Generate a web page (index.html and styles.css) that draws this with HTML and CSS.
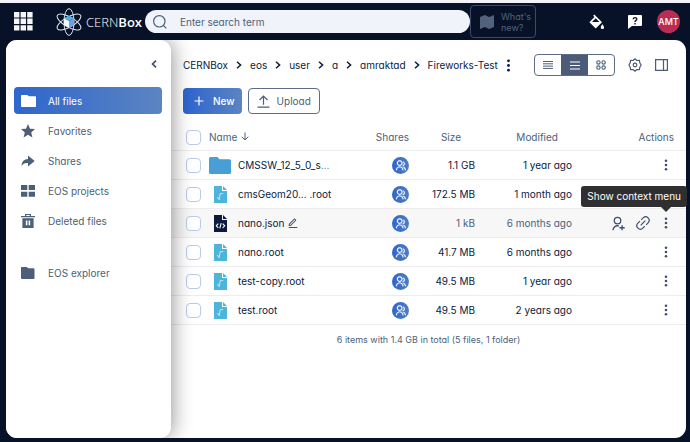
FILE: index.html
```html
<!DOCTYPE html>
<html lang="en">
<head>
<meta charset="utf-8">
<title>Fireworks-Test - CERNBox</title>
<link rel="stylesheet" href="styles.css">
</head>
<body>
<svg class="sprite" aria-hidden="true">
  <defs>
    <linearGradient id="brand" x1="0" x2="1"><stop offset="0" stop-color="#2f66cc"/><stop offset="1" stop-color="#4f7cc4"/></linearGradient>
  </defs>
  <symbol id="dots" viewBox="0 0 14 14"><circle cx="7" cy="2" r="1.500"/><circle cx="7" cy="7" r="1.500"/><circle cx="7" cy="12" r="1.500"/></symbol>
  <symbol id="chevron" viewBox="0 0 6 8"><path d="M1 .8 4.6 4 1 7.2" fill="none" stroke="currentColor" stroke-width="1.5"/></symbol>
  <symbol id="folder" viewBox="2 3 20 18" preserveAspectRatio="none"><path d="M12.4 5H21a1 1 0 0 1 1 1v14a1 1 0 0 1-1 1H3a1 1 0 0 1-1-1V4a1 1 0 0 1 1-1h7.4z"/></symbol>
  <symbol id="group" viewBox="0 0 17 17"><circle cx="8.5" cy="8.5" r="8.5" fill="url(#brand)"/><g transform="translate(3 2.8) scale(.47)" fill="#fff" stroke="#fff" stroke-width=".4"><path d="M2 22C2 17.58 5.58 14 10 14C14.42 14 18 17.58 18 22H16C16 18.69 13.31 16 10 16C6.69 16 4 18.69 4 22H2ZM10 13C6.685 13 4 10.315 4 7C4 3.685 6.685 1 10 1C13.315 1 16 3.685 16 7C16 10.315 13.315 13 10 13ZM10 11C12.21 11 14 9.21 14 7C14 4.79 12.21 3 10 3C7.79 3 6 4.79 6 7C6 9.21 7.79 11 10 11ZM18.28 14.7C21.06 15.96 23 18.75 23 22H21C21 19.56 19.55 17.47 17.46 16.53L18.28 14.7ZM17.6 3.41C19.59 4.24 21 6.2 21 8.5C21 11.37 18.8 13.73 16 13.98V11.96C17.7 11.72 19 10.26 19 8.5C19 7.12 18.2 5.93 17.04 5.36L17.6 3.41Z"/></g></symbol>
  <symbol id="rootfile" viewBox="0 0 13 17"><path fill="#4db5d9" d="M0 0h8v5h5v12H0z"/><path fill="#4db5d9" d="M9 0l4 4H9z"/><path d="M3 12l1-.6 1.2 2.4 1-6.2h3" fill="none" stroke="#c9ecf6" stroke-width=".9"/></symbol>
  <symbol id="codefile" viewBox="0 0 13 17"><path fill="#0b1a3d" d="M0 0h8v5h5v12H0z"/><path fill="#0b1a3d" d="M9 0l4 4H9z"/><path d="M4.3 8.7 2.3 10.8l2 2M8.7 8.7l2 2.1-2 2M7.2 8.2 5.8 13.3" fill="none" stroke="#fff" stroke-width="1.1"/></symbol>
</svg>

<header class="topbar">
  <button class="icon-btn apps" aria-label="Applications"><svg width="19" height="19" viewBox="0 0 19 19"><path d="M0 0h5.4v5.4H0zM6.6 0H12v5.4H6.600zM13.200 0h5.400v5.400h-5.400zM0 6.600h5.400V12H0zM6.600 6.600H12V12H6.600zM13.200 6.600h5.400V12h-5.400zM0 13.200h5.400v5.400H0zM6.600 13.200H12v5.400H6.600zM13.200 13.200h5.400v5.400h-5.400z"/></svg></button>
  <a class="logo" href="#" aria-label="CERNBox home">
    <svg width="26" height="28" viewBox="0 0 26 28"><g fill="none" stroke="#dfe5ee" stroke-width="1"><ellipse cx="13" cy="14" rx="5" ry="13.400"/><ellipse cx="13" cy="14" rx="5" ry="13.400" transform="rotate(60 13 14)"/><ellipse cx="13" cy="14" rx="5" ry="13.400" transform="rotate(-60 13 14)"/></g><path fill="#4fb2e6" d="M13 7.500l5 2.700-5 2.800-5-2.800z"/><path fill="#f4f8fd" d="M8 10.200l5 2.800v7l-5-3z"/><path fill="#6ea0ea" d="M18 10.200l-5 2.800v7l5-3z"/></svg>
    <span>CERN<b>Box</b></span>
  </a>
  <label class="search">
    <svg width="16" height="16" viewBox="0 0 16 16" fill="none" stroke="#4c5f79" stroke-width="1.200"><circle cx="7.300" cy="7.300" r="5.700"/><path d="M11.400 11.400 14.300 14.300"/></svg>
    <input type="search" placeholder="Enter search term" aria-label="Enter search term">
  </label>
  <button class="news"><svg width="14" height="14" viewBox="2 2 20 20"><path d="M2 5l7-3 6 3 7-3v17l-7 3-6-3-7 3z"/></svg><span>What's new?</span></button>
  <div class="tools">
    <button class="icon-btn" aria-label="Switch theme"><svg width="16" height="16" viewBox="0 0 16 16"><path fill-rule="evenodd" d="M5.300.5 13 8.200 6.700 14.500.4 8.200 5.500 3.100 4.200 1.700zM6.700 4.300 3 8h7.400z"/><path d="M13.400 10.200s1.700 2 1.700 3.200a1.700 1.700 0 0 1-3.400 0c0-1.200 1.700-3.200 1.700-3.200z"/></svg></button>
    <button class="icon-btn" aria-label="Feedback"><svg width="14" height="14" viewBox="0 0 14 14"><path d="M1 0h12q1 0 1 1v9q0 1-1 1H4l-4 3V1q0-1 1-1z"/><path d="M5.200 4.300q0-1.700 1.800-1.700t1.800 1.500q0 1-1 1.500-.8.400-.8 1.300M7 8v1.400" fill="none" stroke="#071228" stroke-width="1.400"/></svg></button>
    <button class="avatar" aria-label="Account">AMT</button>
  </div>
</header>

<div class="shell">
  <aside class="sidebar">
    <button class="collapse" aria-label="Collapse sidebar"><svg width="6" height="8" viewBox="0 0 6 8"><path d="M5 .7 1.600 4 5 7.300" fill="none" stroke="#3d4f70" stroke-width="1.700"/></svg></button>
    <nav aria-label="Files">
      <a class="active" href="#"><svg class="wide" width="15" height="12"><use href="#folder"/></svg>All files</a>
      <a href="#"><svg width="14" height="14" viewBox="0 0 14 14"><path d="M7 0l2 4.700 5 .4-3.800 3.300 1.200 5L7 10.800l-4.400 2.600 1.200-5L0 5.100l5-.4z"/></svg>Favorites</a>
      <a href="#"><svg width="14" height="14" viewBox="2 0 22 22"><path d="M13 14h-2c-3.460 0-6.470 1.950-7.970 4.810C3 18.500 3 18.270 3 18 3 12.480 7.480 8 13 8V2.500L23.500 11 13 19.500z"/></svg>Shares</a>
      <a href="#"><svg width="14" height="14" viewBox="0 0 14 14"><path d="M0 1h6.300v5H0zM7.700 1H14v5H7.700zM0 7.700h6.300v5H0zM7.700 7.700H14v5H7.700z"/></svg>EOS projects</a>
      <a href="#"><svg width="14" height="14" viewBox="0 0 14 14"><path fill-rule="evenodd" d="M4 0h6v2h4v1.300H0V2h4zM5.200 1v1h3.600V1zM1.400 4.200h11.200V14H1.400zM4.800 6.500v4.800h1.600V6.500zM7.600 6.500v4.800h1.600V6.500z"/></svg>Deleted files</a>
      <a class="apart" href="#"><svg width="14" height="14" viewBox="0 0 14 14"><path d="M.5 1h5.300l1.300 1.300h5.400q1 0 1 1v8.900q0 .8-1 .8H1q-1 0-1-.8V1.600Q0 1 .5 1z"/></svg>EOS explorer</a>
    </nav>
  </aside>

  <main>
    <div class="location">
      <nav class="crumbs" aria-label="Breadcrumb">
        <a href="#">CERNBox</a><svg width="6" height="8"><use href="#chevron"/></svg>
        <a href="#">eos</a><svg width="6" height="8"><use href="#chevron"/></svg>
        <a href="#">user</a><svg width="6" height="8"><use href="#chevron"/></svg>
        <a href="#">a</a><svg width="6" height="8"><use href="#chevron"/></svg>
        <a href="#">amraktad</a><svg width="6" height="8"><use href="#chevron"/></svg>
        <a href="#">Fireworks-Test</a>
      </nav>
      <button class="icon-btn more" aria-label="Folder actions"><svg width="13" height="13"><use href="#dots"/></svg></button>
      <div class="views">
        <button aria-label="Condensed table"><svg width="10" height="8" viewBox="0 0 10 8"><path d="M0 .5h10M0 2.800h10M0 5.100h10M0 7.400h10" stroke="currentColor" stroke-width="1"/></svg></button>
        <button class="on" aria-label="Default table"><svg width="10" height="9" viewBox="0 0 10 9"><path d="M0 1h10M0 4.500h10M0 8h10" stroke="currentColor" stroke-width="1.200"/></svg></button>
        <button aria-label="Tiles"><svg width="10" height="10" viewBox="0 0 10 10" fill="none" stroke="currentColor" stroke-width="1.100"><circle cx="2.400" cy="2.400" r="1.700"/><circle cx="7.600" cy="2.400" r="1.700"/><circle cx="2.400" cy="7.600" r="1.700"/><circle cx="7.600" cy="7.600" r="1.700"/></svg></button>
      </div>
      <button class="icon-btn line" aria-label="Display options"><svg width="14" height="14" viewBox="0 0 14 14" fill="none" stroke="currentColor" stroke-width="1.200" stroke-linejoin="round"><path d="M7 .8 8.900 2.500l2.500-.2.400 2.500L13.100 7l-1.300 2.200-.4 2.500-2.500-.2L7 13.200l-1.900-1.700-2.500.2-.4-2.500L.9 7l1.300-2.200.4-2.500 2.500.2z"/><circle cx="7" cy="7" r="1.800"/></svg></button>
      <button class="icon-btn line" aria-label="Toggle details panel"><svg width="13" height="12" viewBox="0 0 13 12" fill="none" stroke="currentColor" stroke-width="1.200"><path d="M.6.6h11.800v10.800H.6zM8.500.6v10.800"/></svg></button>
    </div>

    <div class="actions">
      <button class="primary"><svg width="10" height="10" viewBox="0 0 10 10"><path d="M5 .5v9M.5 5h9" stroke="currentColor" stroke-width="1.200"/></svg>New</button>
      <button class="outline"><svg width="13" height="13" viewBox="0 0 13 13"><path d="M6.500 9.800V1.200M2.500 5l4-4 4 4M.5 12.200h12" fill="none" stroke="currentColor" stroke-width="1.200"/></svg>Upload</button>
    </div>

    <table>
      <colgroup><col class="c-check"><col class="c-name"><col class="c-shares"><col class="c-size"><col class="c-date"><col class="c-act"></colgroup>
      <thead>
        <tr><th><input type="checkbox" aria-label="Select all"></th><th class="name-head">Name <svg width="8" height="9" viewBox="0 0 8 9"><path d="M4 .5v7.300M.8 4.700 4 8l3.200-3.300" fill="none" stroke="currentColor"/></svg></th><th>Shares</th><th>Size</th><th>Modified</th><th>Actions</th></tr>
      </thead>
      <tbody>
        <tr><td><input type="checkbox" aria-label="Select CMSSW folder"></td><td><div class="file"><span class="ico"><svg width="22" height="17" viewBox="0 0 22 17"><path fill="#489fd6" d="M1.500 0h7l2 2.200h10q1.500 0 1.500 1.500v11.800q0 1.500-1.500 1.500h-19Q0 17 0 15.500v-14Q0 0 1.500 0z"/></svg></span><a href="#">CMSSW_12_5_0_s<i>...</i></a></div></td><td><svg class="shared" width="17" height="17"><use href="#group"/></svg></td><td>1.1 GB</td><td>1 year ago</td><td><button class="icon-btn" aria-label="Show context menu"><svg width="12" height="12"><use href="#dots"/></svg></button></td></tr>
        <tr><td><input type="checkbox" aria-label="Select cmsGeom20"></td><td><div class="file"><span class="ico"><svg width="13" height="17"><use href="#rootfile"/></svg></span><a href="#">cmsGeom20... .root</a></div></td><td><svg class="shared" width="17" height="17"><use href="#group"/></svg></td><td>172.5 MB</td><td>1 month ago</td><td><button class="icon-btn" aria-label="Show context menu"><svg width="12" height="12"><use href="#dots"/></svg></button></td></tr>
        <tr class="hover"><td><input type="checkbox" aria-label="Select nano.json"></td><td><div class="file"><span class="ico"><svg width="13" height="17"><use href="#codefile"/></svg></span><a href="#">nano.json</a><button class="icon-btn" aria-label="Rename"><svg width="10" height="10" viewBox="2 1 20 21"><path d="M6.410 15.890 16.560 5.750l-1.420-1.420L5 14.480v1.410zM7.240 17.890H3v-4.240L14.430 2.210a1 1 0 0 1 1.420 0l2.830 2.830a1 1 0 0 1 0 1.420zM3 19.890h18v2H3z"/></svg></button></div></td><td><svg class="shared" width="17" height="17"><use href="#group"/></svg></td><td>1 kB</td><td>6 months ago</td><td><div class="row-tools"><button class="icon-btn" aria-label="Share"><svg width="15" height="15" viewBox="3 0 21 23"><path d="M14 14.250v2.090A6 6 0 0 0 6 22H4a8 8 0 0 1 10-7.750zM12 13a6 6 0 1 1 0-12 6 6 0 0 1 0 12zm0-2a4 4 0 1 0 0-8 4 4 0 0 0 0 8zM18 17v-3h2v3h3v2h-3v3h-2v-3h-3v-2z"/></svg></button><button class="icon-btn" aria-label="Copy link"><svg width="14" height="14" viewBox="0 0 14 14" fill="none" stroke="currentColor" stroke-width="1.200"><path d="M4.700 9.300l4.600-4.600M5.200 3.900l2-2a3.400 3.400 0 0 1 4.900 4.900l-2 2M8.800 10.100l-2 2a3.400 3.400 0 0 1-4.900-4.900l2-2"/></svg></button><span class="tip-anchor"><button class="icon-btn" aria-label="Show context menu"><svg width="12" height="12"><use href="#dots"/></svg></button><span class="tooltip" role="tooltip">Show context menu</span></span></div></td></tr>
        <tr><td><input type="checkbox" aria-label="Select nano.root"></td><td><div class="file"><span class="ico"><svg width="13" height="17"><use href="#rootfile"/></svg></span><a href="#">nano.root</a></div></td><td><svg class="shared" width="17" height="17"><use href="#group"/></svg></td><td>41.7 MB</td><td>6 months ago</td><td><button class="icon-btn" aria-label="Show context menu"><svg width="12" height="12"><use href="#dots"/></svg></button></td></tr>
        <tr><td><input type="checkbox" aria-label="Select test-copy.root"></td><td><div class="file"><span class="ico"><svg width="13" height="17"><use href="#rootfile"/></svg></span><a href="#">test-copy.root</a></div></td><td><svg class="shared" width="17" height="17"><use href="#group"/></svg></td><td>49.5 MB</td><td>1 year ago</td><td><button class="icon-btn" aria-label="Show context menu"><svg width="12" height="12"><use href="#dots"/></svg></button></td></tr>
        <tr><td><input type="checkbox" aria-label="Select test.root"></td><td><div class="file"><span class="ico"><svg width="13" height="17"><use href="#rootfile"/></svg></span><a href="#">test.root</a></div></td><td><svg class="shared" width="17" height="17"><use href="#group"/></svg></td><td>49.5 MB</td><td>2 years ago</td><td><button class="icon-btn" aria-label="Show context menu"><svg width="12" height="12"><use href="#dots"/></svg></button></td></tr>
      </tbody>
    </table>
    <p class="summary">6 items with 1.4 GB in total (5 files, 1 folder)</p>
  </main>
</div>
</body>
</html>
```
FILE: styles.css
```css
* { box-sizing: border-box; }

body {
  --ink: #0b1a3d;
  --muted: #4c5f79;
  margin: 0;
  min-height: 100vh;
  display: flex;
  flex-direction: column;
  padding: 0 4px 4px 6px;
  border-top: 3px solid #f4f3fa;
  background: #071228;
  color: var(--ink);
  font: 10px/16px Inter, "Liberation Sans", sans-serif;
  font-feature-settings: "cv11";
}

.sprite { position: absolute; width: 0; height: 0; }
svg { display: block; flex: none; fill: currentColor; }
svg[fill="none"] { fill: none; }
a { color: inherit; text-decoration: none; }
button { font: inherit; font-feature-settings: inherit; color: inherit; margin: 0; padding: 0; border: 0; background: none; }
.icon-btn { display: flex; }

/* Top bar */
.topbar { display: flex; align-items: center; height: 37px; color: #fff; }
.apps { margin-left: 8px; color: #f4f6fa; }
.logo { display: flex; align-items: center; gap: 4px; width: 89px; margin-left: 23px; white-space: nowrap; font: 300 13px/20px "Open Sans", sans-serif; }
.logo b { font-weight: 600; }
.search { display: flex; align-items: center; gap: 12px; flex: 1; height: 23px; padding: 0 7px; border-radius: 12px; background: #f0f3f9; }
.search input { flex: 1; min-width: 0; padding: 0; border: 0; outline: 0; background: none; font: inherit; font-feature-settings: inherit; color: var(--ink); }
.search input::placeholder { color: var(--muted); opacity: 1; }
.news { display: flex; align-items: center; gap: 7px; width: 66px; height: 33px; padding: 0 9px; border: 1px solid #3b4a66; border-radius: 4px; color: #53627c; font-size: 9px; line-height: 11px; text-align: left; }
.tools { display: flex; align-items: center; gap: 23px; margin: 0 6px 0 53px; }
.avatar { width: 23px; height: 23px; margin-left: -8px; border-radius: 50%; background: #b92d53; font-size: 9px; font-weight: 500; }

/* Page body */
.shell { flex: 1; display: flex; border-radius: 11px; background: #fff; }
.sidebar { flex: none; width: 165px; padding: 0 9px 0 8px; border-radius: 11px; background: #fff; box-shadow: 2px 0 20px 0 rgba(0, 0, 0, .4); clip-path: inset(0 -40px 0 0); }
.collapse { display: block; margin: 20px 5px 19px auto; }
.sidebar nav { display: flex; flex-direction: column; gap: 3px; }
.sidebar a { display: flex; align-items: center; gap: 13px; height: 27px; padding: 0 7px; border-radius: 4px; color: var(--muted); }
.sidebar a .wide { margin-right: -1px; }
.sidebar .active { background: linear-gradient(90deg, #2f66cc, #5b84c2); color: #fff; }
.sidebar .apart { margin-top: 22px; }

main { flex: 1; min-width: 0; }
.location { display: flex; align-items: center; margin: 14px 18px 0 12px; height: 22px; color: var(--ink); }
.crumbs { display: flex; align-items: center; gap: 8px; white-space: nowrap; }
.more { margin: 0 auto 0 4px; }
.views { display: flex; height: 22px; overflow: hidden; border: 1px solid #5d6d87; border-radius: 4px; color: var(--muted); }
.views button { display: flex; align-items: center; justify-content: center; width: 26px; }
.views .on { width: 27px; background: #4c5c78; color: #fff; }
.line { margin-left: 13px; color: #4c5c78; }

.actions { display: flex; gap: 6px; margin: 12px 0 0 12px; }
.actions button { display: flex; align-items: center; gap: 9px; height: 26px; padding: 0 7px; border-radius: 4px; }
.actions .primary { padding-left: 11px; background: linear-gradient(90deg, #2c63cf, #5b84c2); color: #fff; font-weight: 500; }
.actions .outline { padding: 0 8px; border: 1px solid #5d6d87; color: var(--muted); gap: 7px; }

/* File list */
table { width: 100%; margin-top: 8px; table-layout: fixed; border-collapse: separate; border-spacing: 0; }
th, td { height: 29px; padding: 0; border-bottom: 1px solid #ececef; text-align: right; white-space: nowrap; font-weight: 400; }
th { padding-top: 2px; color: var(--muted); }
th:nth-child(4), th:nth-child(5) { padding-right: 14px; }
th:nth-child(2), td:nth-child(2) { text-align: left; }
th:last-child { padding-right: 12px; }
.c-check { width: 38px; }
.c-shares { width: 60px; }
.c-size { width: 66px; }
.c-date { width: 97px; }
.c-act { width: 114px; }
.name-head svg { display: inline-block; margin-left: 1px; }
input[type="checkbox"] { appearance: none; display: block; width: 15px; height: 15px; margin: 0 0 0 15px; border: 1px solid #b9cbe6; border-radius: 4px; background: #fff; }
.shared { margin-left: auto; }
.file { display: flex; align-items: center; gap: 7px; }
.file .ico { display: flex; justify-content: center; width: 22px; }
.file i { color: #3f78cf; font-style: normal; }
.file .icon-btn { margin-left: -3px; }
td > .icon-btn { margin: 0 14px 0 auto; }
td .icon-btn { color: #3d4f70; }
.hover td { background: rgba(0, 0, 0, .03); }
.hover td:nth-child(4), .hover td:nth-child(5) { color: var(--muted); }
.row-tools { display: flex; align-items: center; justify-content: flex-end; gap: 10px; padding-right: 14px; }
.tip-anchor { position: relative; }
.tooltip { position: absolute; right: -15px; bottom: 22px; padding: 3px 6px; border-radius: 3px; background: #2f2f31; color: #fff; line-height: 15px; }
.tooltip::after { content: ""; position: absolute; right: 16px; top: 100%; border: 5px solid transparent; border-top-color: #2f2f31; border-bottom: 0; }
.summary { margin: 7px 0 0; text-align: center; font-size: 9px; color: var(--muted); }
```
